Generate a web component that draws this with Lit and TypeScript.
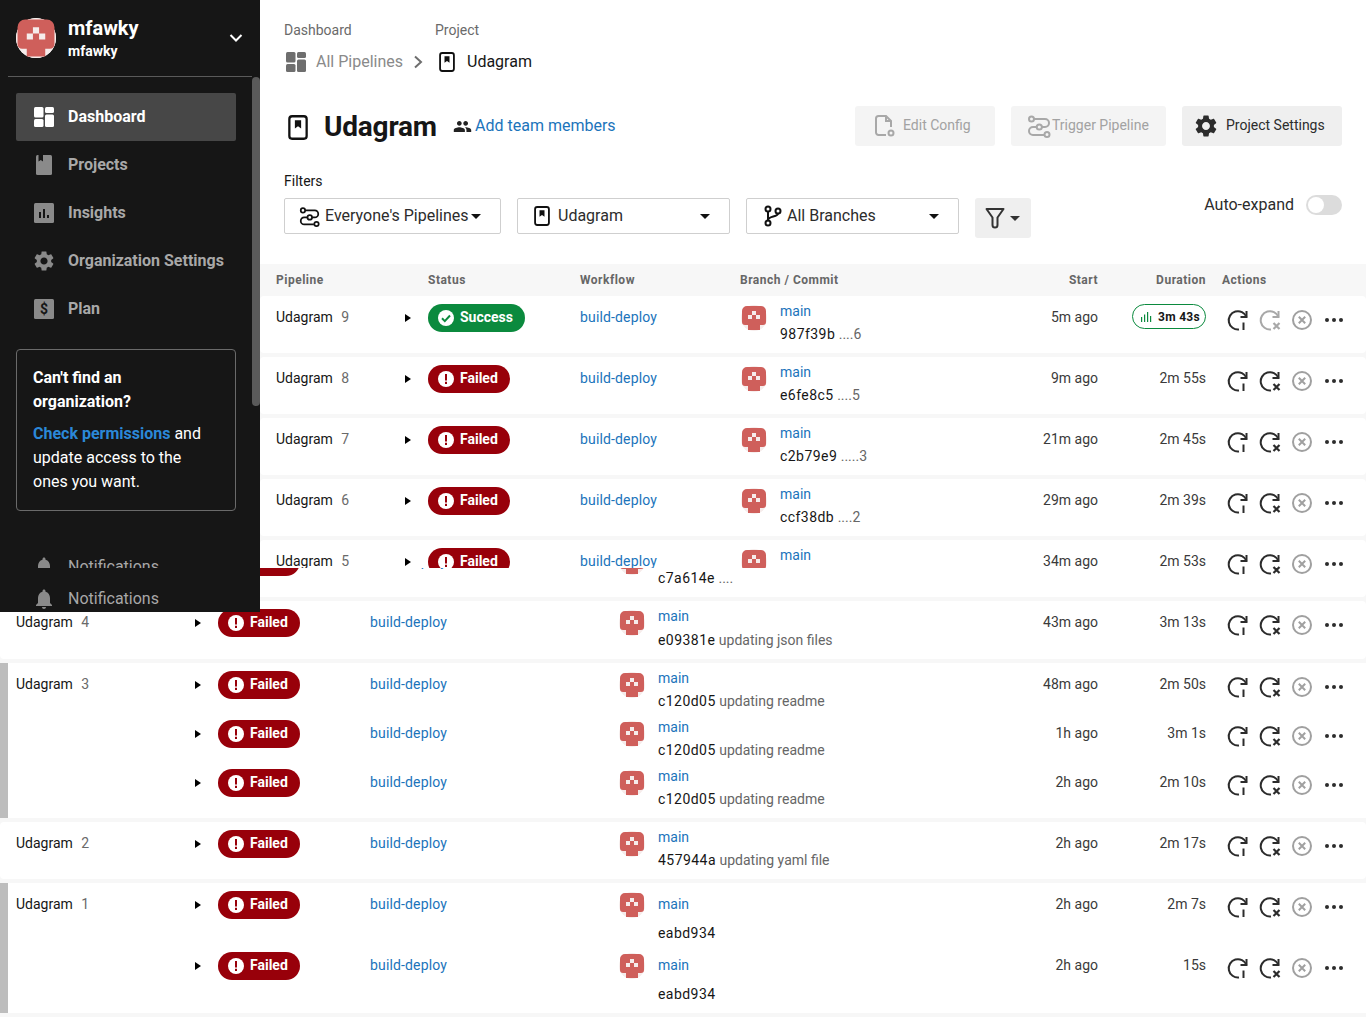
/**
 * Pipelines page of a project dashboard
 */

import { LitElement, html, css } from 'lit';
import { customElement } from 'lit/decorators.js';

type Run = {
  status: 'Success' | 'Failed';
  hash: string;
  msg?: string;
  start: string;
  duration: string;
  running?: boolean;
};

type Pipeline = {
  num: number;
  runs: Run[];
  bar?: boolean;
  seam?: boolean;
};

const failed = (hash: string, msg: string, start: string, duration: string): Run => ({
  status: 'Failed',
  hash,
  msg,
  start,
  duration,
});

const row5: Pipeline = { num: 5, runs: [failed('c7a614e', '....', '34m ago', '2m 53s')] };

const upperRows: Pipeline[] = [
  { num: 9, runs: [{ status: 'Success', hash: '987f39b', msg: '....6', start: '5m ago', duration: '3m 43s', running: true }] },
  { num: 8, runs: [failed('e6fe8c5', '....5', '9m ago', '2m 55s')] },
  { num: 7, runs: [failed('c2b79e9', '.....3', '21m ago', '2m 45s')] },
  { num: 6, runs: [failed('ccf38db', '....2', '29m ago', '2m 39s')] },
  row5,
];

const lowerRows: Pipeline[] = [
  row5,
  { num: 4, seam: true, runs: [failed('e09381e', 'updating json files', '43m ago', '3m 13s')] },
  {
    num: 3,
    bar: true,
    runs: [
      failed('c120d05', 'updating readme', '48m ago', '2m 50s'),
      failed('c120d05', 'updating readme', '1h ago', '3m 1s'),
      failed('c120d05', 'updating readme', '2h ago', '2m 10s'),
    ],
  },
  { num: 2, runs: [failed('457944a', 'updating yaml file', '2h ago', '2m 17s')] },
  {
    num: 1,
    bar: true,
    runs: [
      { status: 'Failed', hash: 'eabd934', start: '2h ago', duration: '2m 7s' },
      { status: 'Failed', hash: 'eabd934', start: '2h ago', duration: '15s' },
    ],
  },
];

const GEAR =
  'M19.14 12.94c.04-.3.06-.61.06-.94 0-.32-.02-.64-.07-.94l2.03-1.58c.18-.14.23-.41.12-.61l-1.92-3.32c-.12-.22-.37-.29-.59-.22l-2.39.96c-.5-.38-1.03-.7-1.62-.94l-.36-2.54c-.04-.24-.24-.41-.48-.41h-3.84c-.24 0-.43.17-.47.41l-.36 2.54c-.59.24-1.13.57-1.62.94l-2.39-.96c-.22-.08-.47 0-.59.22L2.74 8.87c-.12.21-.08.47.12.61l2.03 1.58c-.05.3-.09.63-.09.94s.02.64.07.94l-2.03 1.58c-.18.14-.23.41-.12.61l1.92 3.32c.12.22.37.29.59.22l2.39-.96c.5.38 1.03.7 1.62.94l.36 2.54c.05.24.24.41.48.41h3.84c.24 0 .44-.17.47-.41l.36-2.54c.59-.24 1.13-.56 1.62-.94l2.39.96c.22.08.47 0 .59-.22l1.92-3.32c.12-.22.07-.47-.12-.61l-2.01-1.58zM12 15.6c-1.98 0-3.6-1.62-3.6-3.6s1.62-3.6 3.6-3.6 3.6 1.62 3.6 3.6-1.62 3.6-3.6 3.6z';

const BELL =
  'M12 22c1.1 0 2-.9 2-2h-4c0 1.1.89 2 2 2zm6-6v-5c0-3.07-1.64-5.64-4.5-6.32V4c0-.83-.67-1.5-1.5-1.5s-1.5.67-1.5 1.5v.68C7.63 5.36 6 7.92 6 11v5l-2 2v1h16v-1l-2-2z';

const gearIcon = (size: number, color: string) => html`
  <svg width=${size} height=${size} viewBox="2 2 20 20" fill=${color}><path d=${GEAR}></path></svg>
`;

const bellIcon = () => html`
  <svg class="nav-icon" width="20" height="20" viewBox="2 2 20 20" fill="#8a8a8a"><path d=${BELL}></path></svg>
`;

const dashIcon = (color: string) => html`
  <svg class="nav-icon" width="20" height="20" viewBox="0 0 20 20" fill=${color}>
    <rect x="0" y="0" width="9.5" height="10.5" rx="1.5"></rect>
    <rect x="11" y="0" width="9" height="6" rx="1.5"></rect>
    <rect x="0" y="12" width="9.5" height="8" rx="1.5"></rect>
    <rect x="11" y="7.5" width="9" height="12.5" rx="1.5"></rect>
  </svg>
`;

const bookIcon = (w: number, h: number) => html`
  <svg width=${w} height=${h} viewBox="0 0 19 24" fill="none">
    <rect x="1.2" y="1.2" width="16.6" height="21.6" rx="2.6" stroke="#111" stroke-width="2.2"></rect>
    <path d="M6.5 5h6v8l-3-2.2-3 2.2z" fill="#111"></path>
  </svg>
`;

const projectsIcon = () => html`
  <svg class="nav-icon" width="20" height="20" viewBox="0 0 20 20">
    <rect x="2" y="0" width="16" height="20" rx="1.5" fill="#8a8a8a"></rect>
    <path d="M4.5 0h4.5v6.5l-2.2-1.6-2.3 1.6z" fill="#161616"></path>
  </svg>
`;

const insightsIcon = () => html`
  <svg class="nav-icon" width="20" height="20" viewBox="0 0 20 20">
    <rect width="20" height="20" rx="1.5" fill="#8a8a8a"></rect>
    <path d="M5 9h2v6H5zM9 6h2v9H9zM13 12h2v3h-2z" fill="#161616"></path>
  </svg>
`;

const planIcon = () => html`
  <svg class="nav-icon" width="20" height="20" viewBox="0 0 20 20">
    <rect width="20" height="20" rx="1.5" fill="#8a8a8a"></rect>
    <text x="10" y="15" text-anchor="middle" font-size="14" font-weight="700" font-family="Roboto, sans-serif" fill="#161616">$</text>
  </svg>
`;

const pipelineIcon = (size: number, color: string) => html`
  <svg width=${size} height=${size} viewBox="0 0 24 24" fill="none" stroke=${color} stroke-width="2">
    <circle cx="4.5" cy="5" r="2.5"></circle>
    <path d="M7 5h11a4 4 0 0 1 0 8h-3M9.5 13H6a4 4 0 0 0 0 8h11"></path>
    <circle cx="12.3" cy="13" r="2.6"></circle>
    <circle cx="20" cy="20.5" r="2.5"></circle>
  </svg>
`;

const caret = () => html`
  <svg class="caret" width="10" height="5" viewBox="0 0 10 5"><path d="M0 0h10L5 5z"></path></svg>
`;

const docIcon = () => html`
  <svg width="22" height="24" viewBox="0 0 22 24" fill="none" stroke="#a8a8a8" stroke-width="2">
    <path d="M12 21H4.500A2.500 2.500 0 0 1 2 18.500V4.500A2.500 2.500 0 0 1 4.500 2H12l5 5v6"></path>
    <path d="M12 2v5h5"></path>
    <circle cx="17" cy="19" r="2.500"></circle>
  </svg>
`;

const branchIcon = () => html`
  <svg width="18" height="22" viewBox="0 0 18 22" fill="none" stroke="#111" stroke-width="2">
    <circle cx="4" cy="4" r="2.500"></circle>
    <circle cx="14" cy="6" r="2.500"></circle>
    <circle cx="4" cy="18" r="2.500"></circle>
    <path d="M4 6.500v9M14 8.500c0 3.500-10 2.500-10 6.500"></path>
  </svg>
`;

const filterIcon = () => html`
  <svg width="20" height="22" viewBox="0 0 20 22" fill="none" stroke="#333" stroke-width="2" stroke-linejoin="round">
    <path d="M1.500 2h17l-6 8.500V18a2.500 2.500 0 0 1-5 0v-7.500z"></path>
  </svg>
`;

const avatar = (size: number) => html`
  <svg class="avatar" width=${size} height=${size} viewBox="0 0 26 26">
    <circle cx="13" cy="13" r="13" fill="#f6eceb"></circle>
    <path
      d="M6 1h14a5 5 0 0 1 5 5v11a3 3 0 0 1-3 3h-3v5H7v-5H4a3 3 0 0 1-3-3V6a5 5 0 0 1 5-5z"
      fill="#cf5f5b"
    ></path>
    <path d="M11 6h4v4h-4zM7 10h4v4H7zM15 10h4v4h-4z" fill="#f6eceb"></path>
  </svg>
`;

const statusIcon = (status: Run['status']) =>
  status === 'Success'
    ? html`
        <svg width="18" height="18" viewBox="0 0 18 18">
          <circle cx="9" cy="9" r="8" fill="#fff"></circle>
          <path d="M5 9.300l2.800 2.800L13 6.500" fill="none" stroke="#0b8a3e" stroke-width="2"></path>
        </svg>
      `
    : html`
        <svg width="18" height="18" viewBox="0 0 18 18">
          <circle cx="9" cy="9" r="8" fill="#fff"></circle>
          <path d="M8 4h2v6.500H8zM8 11.800h2V14H8z" fill="#98000a"></path>
        </svg>
      `;

const arcPath = 'M20.500 9A9.200 9.200 0 1 0 13 21.500';
const arrowPath = 'M20.500 3v6H14.500';

const rerunIcon = () => html`
  <svg width="24" height="24" viewBox="0 0 24 24" fill="none" stroke="#2c2c2c" stroke-width="2">
    <path d=${arcPath}></path>
    <path d=${arrowPath}></path>
    <path d="M17.500 14.500v7.500"></path>
  </svg>
`;

const rerunFailedIcon = (color: string) => html`
  <svg width="24" height="24" viewBox="0 0 24 24" fill="none" stroke=${color} stroke-width="2">
    <path d=${arcPath}></path>
    <path d=${arrowPath}></path>
    <path d="M15.500 15l6 6M21.500 15l-6 6" stroke-width="2.200"></path>
  </svg>
`;

const cancelIcon = () => html`
  <svg width="24" height="24" viewBox="0 0 24 24" fill="none" stroke="#a0a0a0" stroke-width="2">
    <circle cx="12" cy="12" r="9"></circle>
    <path d="M8.800 8.800l6.400 6.400M15.200 8.800l-6.400 6.400"></path>
  </svg>
`;

const moreIcon = () => html`
  <svg width="24" height="24" viewBox="0 0 24 24" fill="#2c2c2c">
    <circle cx="5" cy="12" r="2"></circle>
    <circle cx="12" cy="12" r="2"></circle>
    <circle cx="19" cy="12" r="2"></circle>
  </svg>
`;

@customElement('app-root')
export class AppRoot extends LitElement {
  static styles = css`
    :host {
      display: block;
      position: relative;
      width: 1366px;
      height: 1017px;
      overflow: hidden;
      background: #fff;
      color: #161616;
      font-family: Roboto, 'Open Sans', sans-serif;
      font-size: 14px;
      line-height: 20px;
    }

    svg {
      display: block;
      flex: none;
    }

    a {
      color: #1b74bb;
      text-decoration: none;
    }

    /* sidebar lies over the stitched lower part of the list */
    .sidebar {
      position: absolute;
      left: 0;
      top: 0;
      width: 260px;
      height: 612px;
      background: #161616;
      overflow: hidden;
      z-index: 2;
    }

    .scrollbar {
      position: absolute;
      left: 252px;
      top: 77px;
      width: 8px;
      height: 329px;
      background: #5a5a5a;
      border-radius: 4px;
    }

    .account {
      display: flex;
      align-items: center;
      height: 76px;
      margin: 0 8px;
      padding: 0 9px 0 8px;
      border-bottom: 1px solid #5a5a5a;
      box-sizing: content-box;
      color: #fff;
    }

    .account .avatar-ring {
      width: 40px;
      height: 40px;
      border-radius: 50%;
      background: #fff;
      margin-right: 12px;
    }

    .account .names {
      flex: 1;
      font-weight: 700;
    }

    .account .big {
      font-size: 20px;
      line-height: 24px;
    }

    .account .small {
      font-size: 14px;
      line-height: 20px;
      margin-top: 1px;
    }

    .nav {
      display: flex;
      flex-direction: column;
      padding: 16px 24px 0 16px;
    }

    .nav-item {
      display: flex;
      align-items: center;
      gap: 14px;
      height: 48px;
      padding-left: 18px;
      border-radius: 2px;
      font-size: 16px;
      font-weight: 700;
      color: #a8a8a8;
    }

    .nav-item.active {
      background: #474747;
      color: #fff;
    }

    .org-card {
      margin: 16px 24px 0 16px;
      padding: 16px 16px 16px;
      border: 1px solid #6a6a6a;
      border-radius: 4px;
      color: #fff;
      font-size: 16px;
      line-height: 24px;
    }

    .org-card .title {
      font-weight: 700;
      margin-bottom: 8px;
    }

    .org-card a {
      color: #2b88d8;
      font-weight: 700;
    }

    .notif {
      display: flex;
      align-items: flex-start;
      gap: 14px;
      padding-left: 34px;
      font-size: 16px;
      line-height: 24px;
      color: #a8a8a8;
      overflow: hidden;
    }

    .notif.cut {
      height: 13px;
      margin-top: 44px;
    }

    .notif.full {
      margin-top: 19px;
    }

    .notif .nav-icon {
      margin-top: 2px;
    }

    /* page head */
    .upper {
      height: 568px;
      margin-left: 260px;
      overflow: hidden;
      --name-w: 122px;
      --wf-w: 162px;
    }

    .head {
      padding: 20px 24px 0;
    }

    .crumbs {
      display: flex;
    }

    .crumb-label {
      color: #6a6a6a;
      margin-bottom: 12px;
    }

    .crumb-line {
      display: flex;
      align-items: center;
      font-size: 16px;
      height: 20px;
    }

    .crumb.first {
      width: 151px;
    }

    .crumb.first .crumb-line {
      color: #8a8a8a;
      gap: 10px;
      margin-left: 2px;
    }

    .crumb.second .crumb-line {
      gap: 12px;
      margin-left: 4px;
      color: #161616;
    }

    .title-row {
      display: flex;
      align-items: center;
      height: 40px;
      margin-top: 34px;
    }

    .title-row .book {
      margin: 2px 16px 0 4px;
    }

    h1 {
      margin: 2px 0 0;
      width: 114px;
      white-space: nowrap;
      font-size: 28px;
      line-height: 40px;
      font-weight: 700;
      letter-spacing: -0.2px;
    }

    .team {
      display: flex;
      align-items: center;
      gap: 3px;
      margin-left: 15px;
      font-size: 16px;
    }

    .buttons {
      display: flex;
      gap: 16px;
      margin-left: auto;
    }

    .btn {
      display: flex;
      align-items: center;
      height: 40px;
      border-radius: 3px;
      background: #f4f4f4;
      color: #a2a2a2;
    }

    .btn span {
      margin-top: -2px;
    }

    .btn.edit {
      width: 140px;
      padding-left: 19px;
      gap: 7px;
      box-sizing: border-box;
    }

    .btn.trigger {
      width: 155px;
      padding-left: 16px;
      gap: 1px;
      box-sizing: border-box;
    }

    .btn.settings {
      width: 160px;
      padding-left: 13px;
      gap: 9px;
      box-sizing: border-box;
      background: #efefef;
      color: #2c2c2c;
    }

    .filters-label {
      margin-top: 25px;
      margin-bottom: 7px;
    }

    .filters {
      display: flex;
      align-items: flex-start;
      gap: 16px;
      height: 40px;
    }

    .select {
      display: flex;
      align-items: center;
      height: 36px;
      box-sizing: border-box;
      border: 1px solid #cfcfcf;
      border-radius: 2px;
      font-size: 16px;
      color: #2c2c2c;
    }

    .select.who {
      width: 217px;
      padding-left: 14px;
      gap: 5px;
    }

    .select.who .caret {
      margin-left: -3px;
    }

    .select.project {
      width: 213px;
      padding-left: 16px;
      gap: 8px;
    }

    .select.branch {
      width: 213px;
      padding-left: 17px;
      gap: 5px;
    }

    .select .caret {
      fill: #111;
    }

    .select.project .caret,
    .select.branch .caret {
      margin-left: auto;
      margin-right: 19px;
    }

    .filter-btn {
      display: flex;
      align-items: center;
      gap: 5px;
      width: 56px;
      height: 40px;
      padding-left: 10px;
      box-sizing: border-box;
      border-radius: 3px;
      background: #efefef;
    }

    .filter-btn .caret {
      fill: #333;
    }

    .auto {
      display: flex;
      align-items: center;
      gap: 12px;
      margin-left: auto;
      margin-top: -3px;
      font-size: 16px;
      color: #2c2c2c;
    }

    .toggle {
      width: 36px;
      height: 20px;
      border-radius: 10px;
      background: #dcdcdc;
      display: flex;
      align-items: center;
      padding-left: 2px;
      box-sizing: border-box;
    }

    .toggle::before {
      content: '';
      width: 16px;
      height: 16px;
      border-radius: 50%;
      background: #fff;
    }

    /* pipeline list */
    .list {
      background: #f7f7f7;
      display: flex;
      flex-direction: column;
      gap: 4px;
      padding-bottom: 4px;
    }

    .table-head {
      display: flex;
      height: 32px;
      align-items: center;
      margin-top: 26px;
      padding-left: 16px;
      background: #f7f7f7;
      font-size: 12px;
      font-weight: 700;
      letter-spacing: 0.5px;
      color: #666;
    }

    .table-head > :first-child {
      width: var(--name-w);
    }

    .cols {
      flex: 1;
      display: grid;
      grid-template-columns: 30px 152px var(--wf-w) 1fr 120px 108px 160px;
    }

    .table-head .num {
      text-align: right;
    }

    .table-head .branch-h {
      margin-left: -2px;
    }

    .table-head .actions-h {
      padding-left: 16px;
    }

    .row {
      display: flex;
      background: #fff;
      border-radius: 4px;
      padding: 8px 0 0 16px;
    }

    .row.bar {
      border-left: 8px solid #bdbdbd;
      padding-left: 8px;
      border-radius: 0;
    }

    .row.seam {
      padding-bottom: 1px;
    }

    .row.seam .commit .sha-line {
      margin-top: 4px;
    }

    .name {
      width: var(--name-w);
      flex: none;
      padding-top: 3px;
    }

    .name span {
      color: #6a6a6a;
      margin-left: 5px;
    }

    .runs {
      flex: 1;
    }

    .run {
      display: grid;
      grid-template-columns: 30px 152px var(--wf-w) 1fr 120px 108px 160px;
      height: 49px;
    }

    .run.tall {
      height: 61px;
    }

    .expand {
      width: 0;
      height: 0;
      margin: 10px 0 0 7px;
      border-style: solid;
      border-width: 4.500px 0 4.500px 6px;
      border-color: transparent transparent transparent #000;
    }

    .badge {
      display: inline-flex;
      align-items: center;
      gap: 5px;
      height: 28px;
      padding: 0 12px 0 9px;
      border-radius: 14px;
      color: #fff;
      font-weight: 700;
      justify-self: start;
    }

    .badge span {
      margin-top: -2px;
    }

    .badge.success {
      background: #0b8a3e;
    }

    .badge.failed {
      background: #98000a;
    }

    .wf {
      padding-top: 3px;
      letter-spacing: 0.15px;
    }

    .commit {
      display: flex;
      gap: 13px;
      margin-left: -1px;
    }

    .commit .avatar {
      margin-top: 1px;
    }

    .commit .lines {
      margin-top: -3px;
    }

    .commit .sha-line {
      margin-top: 3px;
      color: #666;
      white-space: nowrap;
    }

    .commit .sha {
      color: #161616;
      letter-spacing: 0.45px;
    }

    .run.tall .commit .lines {
      margin-top: 3px;
    }

    .run.tall .commit .sha-line {
      margin-top: 9px;
    }

    .num-cell {
      text-align: right;
      padding-top: 3px;
      color: #3a3a3a;
    }

    .pill {
      display: inline-flex;
      align-items: center;
      gap: 6px;
      height: 25px;
      padding: 0 5px 0 7px;
      box-sizing: border-box;
      border: 1px solid #0b8a3e;
      border-radius: 13px;
      margin-top: -3px;
      font-size: 12px;
      font-weight: 700;
      letter-spacing: 0.3px;
      color: #161616;
    }

    .actions {
      display: flex;
      gap: 8px;
      padding: 4px 0 0 20px;
      align-items: flex-start;
    }

    .lower {
      height: 449px;
      overflow: hidden;
      --name-w: 172px;
      --wf-w: 250px;
    }

    .lower .list {
      margin-top: -28px;
    }
  `;

  private renderRun(run: Run) {
    const ok = run.status === 'Success';
    return html`
      <div class="run ${run.msg ? '' : 'tall'}">
        <div class="expand"></div>
        <div class="badge ${ok ? 'success' : 'failed'}">${statusIcon(run.status)}<span>${run.status}</span></div>
        <div class="wf"><a>build-deploy</a></div>
        <div class="commit">
          ${avatar(26)}
          <div class="lines">
            <div><a>main</a></div>
            <div class="sha-line"><span class="sha">${run.hash}</span> ${run.msg ?? ''}</div>
          </div>
        </div>
        <div class="num-cell">${run.start}</div>
        <div class="num-cell">
          ${run.running
            ? html`<span class="pill">
                <svg width="12" height="12" viewBox="0 0 12 12" fill="#0b8a3e">
                  <path d="M1 6h1.200v5H1zM4 3.500h1.200V11H4zM7 1h1.200v10H7zM10 5h1.200v6H10z"></path>
                </svg>
                ${run.duration}
              </span>`
            : run.duration}
        </div>
        <div class="actions">
          ${rerunIcon()} ${rerunFailedIcon(ok ? '#a8a8a8' : '#2c2c2c')} ${cancelIcon()} ${moreIcon()}
        </div>
      </div>
    `;
  }

  private renderRow(row: Pipeline) {
    return html`
      <div class="row ${row.bar ? 'bar' : ''} ${row.seam ? 'seam' : ''}">
        <div class="name">Udagram <span>${row.num}</span></div>
        <div class="runs">${row.runs.map((r) => this.renderRun(r))}</div>
      </div>
    `;
  }

  private renderSidebar() {
    return html`
      <aside class="sidebar">
        <div class="account">
          <div class="avatar-ring">${avatar(40)}</div>
          <div class="names">
            <div class="big">mfawky</div>
            <div class="small">mfawky</div>
          </div>
          <svg width="14" height="14" viewBox="0 0 14 14" fill="none" stroke="#fff" stroke-width="2">
            <path d="M1.500 4l5.500 5.500L12.500 4"></path>
          </svg>
        </div>
        <nav class="nav">
          <div class="nav-item active">${dashIcon('#fff')}Dashboard</div>
          <div class="nav-item">${projectsIcon()}Projects</div>
          <div class="nav-item">${insightsIcon()}Insights</div>
          <div class="nav-item">${gearIcon(20, '#8a8a8a')}Organization Settings</div>
          <div class="nav-item">${planIcon()}Plan</div>
        </nav>
        <div class="org-card">
          <div class="title">Can't find an organization?</div>
          <div><a>Check permissions</a> and update access to the ones you want.</div>
        </div>
        <div class="notif cut">${bellIcon()}Notifications</div>
        <div class="notif full">${bellIcon()}Notifications</div>
        <div class="scrollbar"></div>
      </aside>
    `;
  }

  private renderHead() {
    return html`
      <header class="head">
        <div class="crumbs">
          <div class="crumb first">
            <div class="crumb-label">Dashboard</div>
            <div class="crumb-line">
              ${dashIcon('#6e6e6e')}<span>All Pipelines</span>
              <svg width="10" height="14" viewBox="0 0 10 14" fill="none" stroke="#6e6e6e" stroke-width="2">
                <path d="M2 1.500l6 5.500-6 5.500"></path>
              </svg>
            </div>
          </div>
          <div class="crumb second">
            <div class="crumb-label">Project</div>
            <div class="crumb-line">${bookIcon(16, 20)}<span>Udagram</span></div>
          </div>
        </div>
        <div class="title-row">
          <div class="book">${bookIcon(20, 25)}</div>
          <h1>Udagram</h1>
          <a class="team">
            <svg width="19" height="19" viewBox="0 0 24 24" fill="#222">
              <path
                d="M16 11c1.660 0 2.990-1.340 2.990-3S17.660 5 16 5c-1.660 0-3 1.340-3 3s1.340 3 3 3zm-8 0c1.660 0 2.990-1.340 2.990-3S9.660 5 8 5C6.340 5 5 6.340 5 8s1.340 3 3 3zm0 2c-2.330 0-7 1.170-7 3.500V19h14v-2.500c0-2.330-4.670-3.500-7-3.500zm8 0c-.290 0-.620.020-.970.050 1.160.840 1.970 1.970 1.970 3.450V19h6v-2.500c0-2.330-4.670-3.500-7-3.500z"
              ></path>
            </svg>
            <span>Add team members</span>
          </a>
          <div class="buttons">
            <div class="btn edit">${docIcon()}<span>Edit Config</span></div>
            <div class="btn trigger">${pipelineIcon(24, '#a8a8a8')}<span>Trigger Pipeline</span></div>
            <div class="btn settings">${gearIcon(22, '#2c2c2c')}<span>Project Settings</span></div>
          </div>
        </div>
        <div class="filters-label">Filters</div>
        <div class="filters">
          <div class="select who">${pipelineIcon(21, '#111')}<span>Everyone's Pipelines</span>${caret()}</div>
          <div class="select project">${bookIcon(16, 20)}<span>Udagram</span>${caret()}</div>
          <div class="select branch">${branchIcon()}<span>All Branches</span>${caret()}</div>
          <div class="filter-btn">${filterIcon()}${caret()}</div>
          <div class="auto"><span>Auto-expand</span><div class="toggle"></div></div>
        </div>
      </header>
    `;
  }

  protected render() {
    return html`
      ${this.renderSidebar()}
      <section class="upper">
        ${this.renderHead()}
        <div class="table-head">
          <div>Pipeline</div>
          <div class="cols">
            <div></div>
            <div>Status</div>
            <div>Workflow</div>
            <div class="branch-h">Branch / Commit</div>
            <div class="num">Start</div>
            <div class="num">Duration</div>
            <div class="actions-h">Actions</div>
          </div>
        </div>
        <div class="list">${upperRows.map((r) => this.renderRow(r))}</div>
      </section>
      <section class="lower">
        <div class="list">${lowerRows.map((r) => this.renderRow(r))}</div>
      </section>
    `;
  }
}

declare global {
  interface HTMLElementTagNameMap {
    'app-root': AppRoot;
  }
}
